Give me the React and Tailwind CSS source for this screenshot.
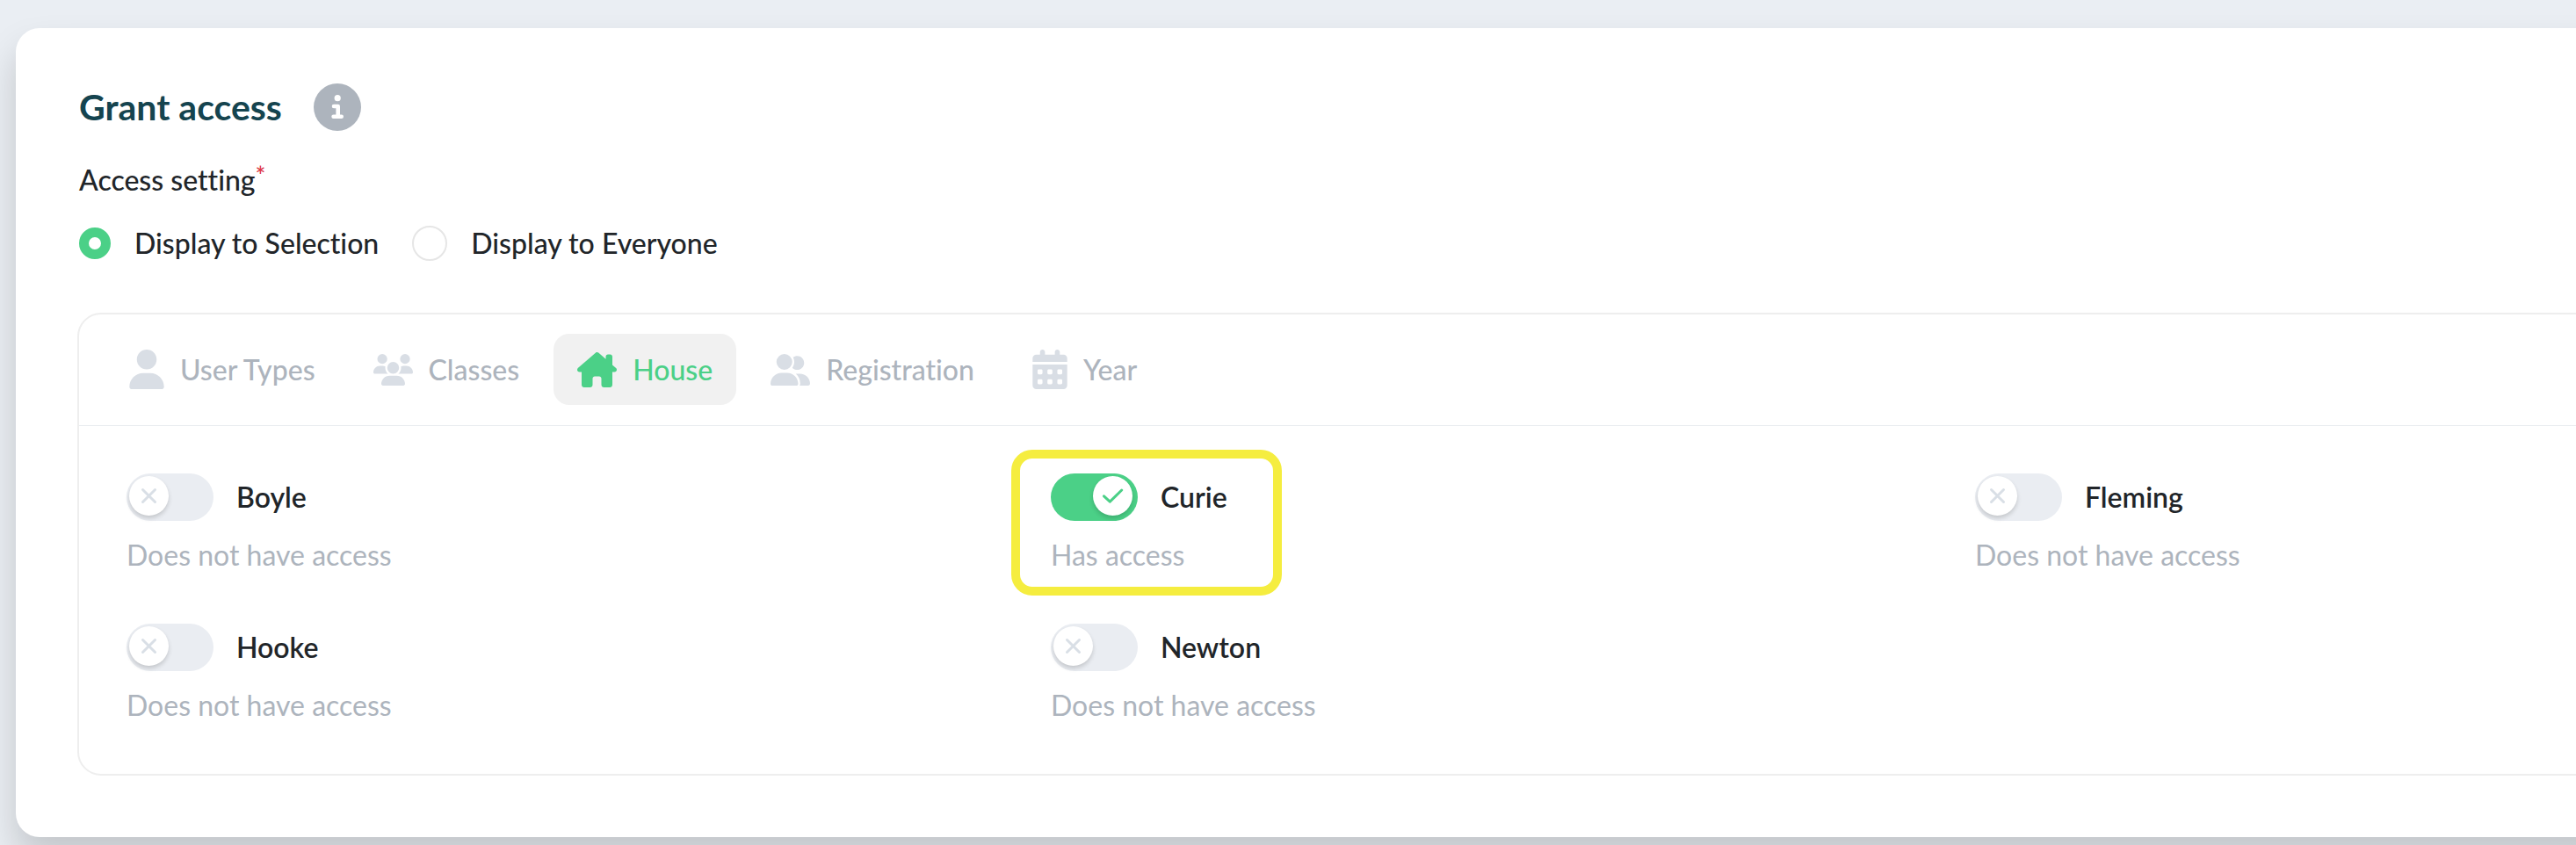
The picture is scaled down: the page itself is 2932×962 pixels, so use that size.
import { useState } from "react";
import { FaUser, FaUsers, FaHouseChimney, FaUserGroup, FaCalendarDays } from "react-icons/fa6";

const tabs = [
  { name: "User Types", Icon: FaUser, size: "w-10 h-[45px]" },
  { name: "Classes", Icon: FaUsers, size: "w-[45px] h-9" },
  { name: "House", Icon: FaHouseChimney, size: "w-[45px] h-10" },
  { name: "Registration", Icon: FaUserGroup, size: "w-[45px] h-9" },
  { name: "Year", Icon: FaCalendarDays, size: "w-10 h-[45px]" },
];

const houses = ["Boyle", "Curie", "Fleming", "Hooke", "Newton"];

function InfoIcon() {
  return (
    <svg viewBox="0 0 54 54" className="size-[54px]" aria-hidden="true">
      <circle cx="27" cy="27" r="27" fill="#adb4bd" />
      <circle cx="27.2" cy="16.7" r="3.6" fill="#fff" />
      <path d="M23 26h4.7v11.7M22.6 37.7h9.1" fill="none" stroke="#fff" strokeWidth="4.6" strokeLinecap="round" strokeLinejoin="round" />
    </svg>
  );
}

function Radio({ label, checked, onChange }) {
  return (
    <label className="flex items-center gap-[27px]">
      <input
        type="radio"
        name="access"
        checked={checked}
        onChange={onChange}
        className="size-10 shrink-0 appearance-none rounded-full border-2 border-[#e6e6e6] bg-white checked:size-9 checked:border-[11px] checked:border-[#4bd087]"
      />
      {label}
    </label>
  );
}

function Toggle({ id, checked, onChange }) {
  return (
    <span className="relative block h-[54px] w-[99px]">
      <input
        id={id}
        type="checkbox"
        role="switch"
        checked={checked}
        onChange={onChange}
        className="block h-full w-full appearance-none rounded-full bg-[#eaedf2] checked:bg-[#4bd087]"
      />
      <span
        className={
          "pointer-events-none absolute top-[3px] size-[45px] rounded-full bg-white shadow-[0_3px_5px_rgba(0,0,0,0.16)] " +
          (checked ? "right-[6px]" : "left-[3px]")
        }
      >
        <svg viewBox="0 0 45 45" className="size-full" fill="none" strokeLinecap="round" strokeLinejoin="round" strokeWidth="3" aria-hidden="true">
          {checked ? (
            <path d="M12.5 22.8l6.8 6.3L32.7 16" stroke="#4bd087" />
          ) : (
            <path d="M15.5 15.5l14 14M29.5 15.5l-14 14" stroke="#d9dfe6" />
          )}
        </svg>
      </span>
    </span>
  );
}

export default function App() {
  const [access, setAccess] = useState("selection");
  const [tab, setTab] = useState("House");
  const [granted, setGranted] = useState({ Curie: true });

  return (
    <div className="min-h-screen overflow-hidden bg-[#eaeef3] pt-8 pb-[9px] pl-[18px] font-['Lato','Liberation_Sans',sans-serif] text-[32px] leading-[48px] text-[#212529] [font-variant-ligatures:none]">
      <main className="-mr-[494px] rounded-[27px] bg-white px-[70px] pt-[63px] pb-[70px] pl-[72px] shadow-[0_24px_40px_rgba(0,0,0,0.17)]">
        <header className="flex items-center gap-9">
          <h1 className="text-[41px] font-bold text-[#15444f]">Grant access</h1>
          <button type="button" aria-label="About granting access">
            <InfoIcon />
          </button>
        </header>

        <fieldset className="mt-8 font-medium">
          <legend className="flex">
            Access setting
            <span className="text-[28px] leading-9 text-[#dc3545]">*</span>
          </legend>
          <div className="mt-6 flex h-12 items-center gap-[38px]">
            <Radio label="Display to Selection" checked={access === "selection"} onChange={() => setAccess("selection")} />
            <Radio label="Display to Everyone" checked={access === "everyone"} onChange={() => setAccess("everyone")} />
          </div>
        </fieldset>

        <section className="mt-[55px] -ml-[2px] rounded-[27px] border-2 border-[#eeeeee]">
          <nav className="flex gap-3 border-b border-[#e9ecf0] px-[30px] pt-[22px] pb-[23px]">
            {tabs.map(({ name, Icon, size }) => (
              <button
                key={name}
                type="button"
                aria-pressed={tab === name}
                onClick={() => setTab(name)}
                className={
                  "flex h-[81px] items-center gap-[18px] rounded-[18px] px-[27px] font-medium " +
                  (tab === name ? "bg-[#f1f1f1] text-[#4bd087]" : "text-[#adb4bd]")
                }
              >
                <Icon className={size + (tab === name ? "" : " text-[#d9dee5]")} />
                {name}
              </button>
            ))}
          </nav>
          <ul className="grid grid-cols-3 gap-y-[54px] px-[54px] py-[54px]">
            {houses.map((name) => (
              <li key={name} className="relative">
                {name === "Curie" && (
                  <span className="pointer-events-none absolute -top-[27px] -left-[45px] h-[166px] w-[308px] rounded-[24px] border-[10px] border-[#f5ed3f]" />
                )}
                <div className="flex items-center gap-[26px]">
                  <Toggle
                    id={name}
                    checked={!!granted[name]}
                    onChange={() => setGranted({ ...granted, [name]: !granted[name] })}
                  />
                  <label htmlFor={name} className="font-semibold">{name}</label>
                </div>
                <p className="mt-[15px] text-[#adb4bd]">{granted[name] ? "Has access" : "Does not have access"}</p>
              </li>
            ))}
          </ul>
        </section>
      </main>
    </div>
  );
}
